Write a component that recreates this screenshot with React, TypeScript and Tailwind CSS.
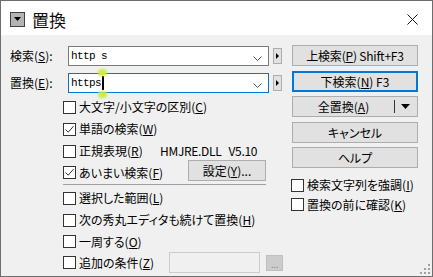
import React from "react";

/** チェックボックス（Win10風） */
function Check({ checked = false }: { checked?: boolean }) {
  return (
    <span className="w-[13px] h-[13px] border border-[#333] bg-white flex items-center justify-center shrink-0">
      {checked && (
        <svg width="11" height="11" viewBox="0 0 11 11">
          <path d="M1.5 5.5 L4.2 8.2 L9.5 2.2" fill="none" stroke="#333" strokeWidth="1" />
        </svg>
      )}
    </span>
  );
}

function CheckRow({
  checked,
  children,
  className = "",
}: {
  checked?: boolean;
  children: React.ReactNode;
  className?: string;
}) {
  return (
    <div className={`flex items-center gap-[3px] ${className}`}>
      <Check checked={checked} />
      <span className="leading-none whitespace-nowrap">{children}</span>
    </div>
  );
}

function Btn({
  children,
  primary = false,
  className = "",
}: {
  children: React.ReactNode;
  primary?: boolean;
  className?: string;
}) {
  return (
    <div
      className={`h-[21px] flex items-center justify-center bg-[#e1e1e1] leading-none whitespace-nowrap ${
        primary ? "border-2 border-[#0078d7]" : "border border-[#adadad]"
      } ${className}`}
    >
      {children}
    </div>
  );
}

function Chevron() {
  return (
    <svg width="9" height="5" viewBox="0 0 9 5" className="absolute right-[6px] top-[9px]">
      <path d="M0.5 0.5 L4.5 4.5 L8.5 0.5" fill="none" stroke="#555" strokeWidth="1" />
    </svg>
  );
}

function SideArrow() {
  return (
    <div className="ml-[4px] w-[9px] h-[16px] bg-[#e1e1e1] border border-[#adadad] flex items-center justify-center">
      <svg width="3" height="6" viewBox="0 0 3 6">
        <path d="M0 0 L3 3 L0 6 Z" fill="#000" />
      </svg>
    </div>
  );
}

export default function App() {
  return (
    <div className="w-[433px] h-[277px] relative overflow-hidden border border-[#6d6d6d] bg-[#f0f0f0] flex flex-col font-['Noto_Sans_CJK_JP',sans-serif] [font-feature-settings:'palt'] text-[12px] text-black">
      {/* タイトルバー */}
      <div className="h-[34px] bg-white flex items-center pl-[9px] pr-[14px] pt-[2px] shrink-0">
        <div className="w-[15px] h-[15px] border border-[#404040] bg-[#b4b4b4] flex items-center justify-center">
          <svg width="7" height="4" viewBox="0 0 7 4">
            <path d="M0 0 L7 0 L3.5 4 Z" fill="#000" />
          </svg>
        </div>
        <span className="ml-[7px] text-[17px] leading-none text-[#111]">置換</span>
        <svg width="11" height="11" viewBox="0 0 11 11" className="ml-auto">
          <path d="M0.5 0.5 L10.5 10.5 M10.5 0.5 L0.5 10.5" stroke="#111" strokeWidth="1" />
        </svg>
      </div>

      {/* 本体 */}
      <div className="flex flex-1 pl-[9px]">
        {/* 左カラム */}
        <div className="w-[273px] flex flex-col">
          <div className="mt-[11px] h-[20px] flex items-center">
            <span className="w-[58px] leading-none">
              検索(<u>S</u>):
            </span>
            <div className="relative w-[201px] h-[20px] bg-white border border-[#7a7a7a] flex items-center pl-[2px] font-['Liberation_Mono','Noto_Sans_CJK_JP',monospace] text-[11px] tracking-[-0.6px]">
              {"http s"}
              <Chevron />
            </div>
            <SideArrow />
          </div>
          <div className="mt-[7px] h-[20px] flex items-center">
            <span className="w-[58px] leading-none">
              置換(<u>E</u>):
            </span>
            <div className="relative w-[201px] h-[20px] bg-white border border-[#0078d7] flex items-center pl-[2px] font-['Liberation_Mono','Noto_Sans_CJK_JP',monospace] text-[11px] tracking-[-0.6px]">
              https
              <span className="w-[2px] h-[14px] bg-black ml-[1px]" />
              <Chevron />
            </div>
            <SideArrow />
          </div>

          {/* オプション */}
          <div className="pl-[53px] mt-[3px] flex flex-col">
            <CheckRow className="h-[22px]">
              大文字/小文字の区別(<u>C</u>)
            </CheckRow>
            <CheckRow className="h-[22px]" checked>
              単語の検索(<u>W</u>)
            </CheckRow>
            <div className="h-[22px] flex items-center">
              <CheckRow className="w-[97px]">
                正規表現(<u>R</u>)
              </CheckRow>
              <span className="leading-none tracking-[-0.3px]">
                HMJRE.DLL<span className="ml-[7px]">V5.10</span>
              </span>
            </div>
            <div className="h-[21px] flex items-start">
              <CheckRow className="w-[125px] h-[21px]" checked>
                あいまい検索(<u>F</u>)
              </CheckRow>
              <Btn className="w-[78px] h-[20px] -mt-[2px]">
                設定(<u>Y</u>)...
              </Btn>
            </div>
            <div className="mt-[1px] w-[203px] h-px bg-[#a0a0a0]" />
            <div className="mt-[2px] flex flex-col">
              <CheckRow className="h-[22px]">
                選択した範囲(<u>L</u>)
              </CheckRow>
              <CheckRow className="h-[22px]">
                次の秀丸エディタも続けて置換(<u>H</u>)
              </CheckRow>
              <CheckRow className="h-[21px]">
                一周する(<u>O</u>)
              </CheckRow>
              <div className="h-[21px] flex items-center">
                <CheckRow className="w-[110px]">
                  追加の条件(<u>Z</u>)
                </CheckRow>
                <div className="w-[94px] h-[21px] border border-[#cccccc] bg-[#f0f0f0]" />
                <div className="ml-[6px] w-[17px] h-[16px] bg-[#cccccc] border border-[#bfbfbf] flex items-end justify-center text-[9px] leading-[10px] text-[#8a8a8a]">
                  ...
                </div>
              </div>
            </div>
          </div>
        </div>

        {/* 右カラム */}
        <div className="ml-[9px] w-[126px] flex flex-col">
          <Btn className="mt-[10px] tracking-[-0.2px]">
            上検索(<u>P</u>) Shift+F3
          </Btn>
          <Btn className="mt-[5px]" primary>
            下検索(<u>N</u>) F3
          </Btn>
          <div className="mt-[4px] h-[21px] flex items-center bg-[#e1e1e1] border border-[#adadad]">
            <span className="w-[101px] text-center leading-none">
              全置換(<u>A</u>)
            </span>
            <span className="w-px h-[13px] bg-[#333]" />
            <svg width="9" height="5" viewBox="0 0 9 5" className="ml-[6px]">
              <path d="M0 0 L9 0 L4.5 5 Z" fill="#000" />
            </svg>
          </div>
          <Btn className="mt-[5px]">キャンセル</Btn>
          <Btn className="mt-[4px]">ヘルプ</Btn>
          <CheckRow className="mt-[7px] h-[20px] -ml-[1px]">
            検索文字列を強調(<u>I</u>)
          </CheckRow>
          <CheckRow className="h-[19px] -ml-[1px]">
            置換の前に確認(<u>K</u>)
          </CheckRow>
        </div>
      </div>

      {/* カーソル位置のマーカー */}
      <span className="absolute left-[97px] top-[68px] w-[9px] h-[7px] rounded-full bg-[#c6ee4c] blur-[1px]" />
      <span className="absolute left-[97px] top-[90px] w-[9px] h-[7px] rounded-full bg-[#c6ee4c] blur-[1px]" />

      {/* サイズ変更グリップ */}
      <svg width="11" height="11" viewBox="0 0 11 11" className="absolute right-[1px] bottom-[1px]">
        <rect x="8" y="0" width="2" height="2" fill="#a0a0a0" />
        <rect x="4" y="4" width="2" height="2" fill="#a0a0a0" />
        <rect x="8" y="4" width="2" height="2" fill="#a0a0a0" />
        <rect x="0" y="8" width="2" height="2" fill="#a0a0a0" />
        <rect x="4" y="8" width="2" height="2" fill="#a0a0a0" />
        <rect x="8" y="8" width="2" height="2" fill="#a0a0a0" />
      </svg>
    </div>
  );
}
